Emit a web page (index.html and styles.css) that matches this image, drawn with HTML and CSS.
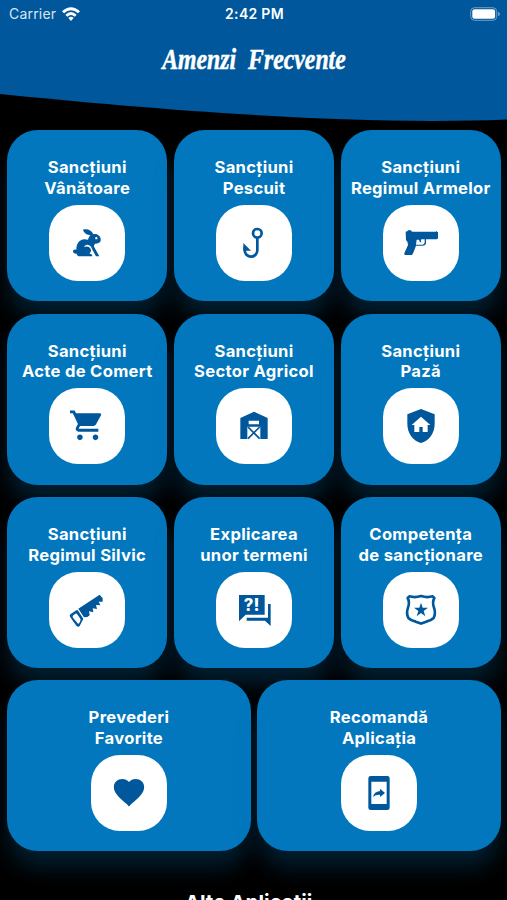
FILE: index.html
```html
<!DOCTYPE html>
<html lang="ro">
<head>
<meta charset="utf-8">
<title>Amenzi Frecvente</title>
<link rel="stylesheet" href="styles.css">
</head>
<body>
<header class="header">
  <div class="status">
    <div class="carrier">Carrier
      <svg class="wifi" viewBox="0 0 54 42"><path d="M0 13Q27-12 54 13L48 19Q27 0 6 19ZM10 23Q27 7 44 23L38 29Q27 19 16 29ZM19 33Q27 26 35 33L27 42Z"/></svg>
    </div>
    <div class="time">2:42 PM</div>
    <svg class="battery" viewBox="0 0 30 14"><rect class="shell" x=".7" y=".7" width="26" height="12.6" rx="3.8"/><rect x="2.3" y="2.3" width="22.8" height="9.4" rx="2.2"/><path class="nub" d="M28 4.7Q30 5.5 30 7T28 9.3Z"/></svg>
  </div>
  <h1 class="title"><span>Amenzi&nbsp; Frecvente</span></h1>
</header>
<main class="cards">
  <a class="card"><span class="label">Sancțiuni<br>Vânătoare</span><span class="tile"><svg viewBox="211 317 102 102"><path fill-rule="evenodd" d="M250 328C262 325 275 328 281 342C287 340 293 342 296 345C301 348 304 354 303 361C302 366 296 369 286 370C283 374 282 377 284 381L299 408H289L277 386C275 378 270 374 263 373C258 373 255 376 253 380C263 375 273 381 274 389C274 394 272 397 269 400C275 400 278 403 278 408H240C235 408 232 405 231 400C225 401 220 398 220 393C220 388 225 386 230 388C230 370 239 358 254 357L265 358C267 352 269 347 273 344C264 344 254 340 250 328ZM290 350A3.5 3.5 0 1 0 290 357A3.5 3.5 0 1 0 290 350Z"/></svg></span></a>
  <a class="card"><span class="label">Sancțiuni<br>Pescuit</span><span class="tile"><svg class="line" viewBox="81 76 102 102"><circle cx="142" cy="98" r="13"/><path d="M142 111V149A19 19 0 0 1 104 149V138"/><path class="solid" d="M100 127L123 150H100Z"/></svg></span></a>
  <a class="card"><span class="label">Sancțiuni<br>Regimul Armelor</span><span class="tile"><svg viewBox="461 317 102 102"><path fill-rule="evenodd" d="M466 334L471 333L473 330H482L485 334H557L560 331V335H563V354L560 357H527V368Q526 376 517 376H497L489 397L485 404H464Q461 403 462 399L473 374Q475 366 467 359ZM499 358L497 373H516Q523 373 523 366V357H513Q510 361 513 367Q507 365 506 358Z"/></svg></span></a>
  <a class="card"><span class="label">Sancțiuni<br>Acte de Comert</span><span class="tile"><svg class="cart" viewBox="0 0 24 24"><path d="M7 18c-1.100 0-1.990.900-1.990 2S5.900 22 7 22s2-.9 2-2-.9-2-2-2zM0 1v2h2l3.600 7.590-1.350 2.450c-.16.280-.25.610-.25.960 0 1.100.9 2 2 2h14v-2H6.420c-.14 0-.25-.11-.25-.25l.03-.12.900-1.630h9.450c.75 0 1.410-.41 1.750-1.030l3.580-6.490c.08-.14.120-.31.120-.48 0-.55-.45-1-1-1H4.210l-.94-2H0zm18 17c-1.100 0-1.990.900-1.990 2s.89 2 1.990 2 2-.9 2-2-.9-2-2-2z"/></svg></span></a>
  <a class="card"><span class="label">Sancțiuni<br>Sector Agricol</span><span class="tile"><svg viewBox="81 72 102 102"><path fill-rule="evenodd" d="M91 99L132 80L173 99V162H91ZM116 107V118H147V107ZM112 125V162H151V125Z"/><path class="brace" d="M114 126L149 161M149 126L114 161"/></svg></span></a>
  <a class="card"><span class="label">Sancțiuni<br>Pază</span><span class="tile"><svg viewBox="461 297 102 102"><path fill-rule="evenodd" d="M512 297L553 313V341C553 370 536 392 512 399C488 392 471 370 471 341V313ZM512 320L484 345H492V366H507V351H517V366H532V345H540Z"/></svg></span></a>
  <a class="card"><span class="label">Sancțiuni<br>Regimul Silvic</span><span class="tile"><svg viewBox="211 306 102 102"><path d="M236 353L300 311L309 322V332L297 332L302 343L289 342L292 354L279 352L281 364L268 361L270 373L263 378L253 379Z"/><path fill-rule="evenodd" d="M212 370L230 358Q233 356 236 360L250 382Q252 386 248 389L240 405Q236 410 230 404L212 379Q208 374 212 370ZM221 373Q217 376 220 380L233 396Q236 400 239 396L242 389Q244 386 241 382L232 369Q230 366 227 368Z"/></svg></span></a>
  <a class="card"><span class="label">Explicarea<br>unor termeni</span><span class="tile"><svg class="chat" viewBox="81 72 102 102"><path d="M87 78H164V137H107L87 157Z"/><path d="M174 105H182V171L165 155H110V146H174Z"/><text x="125" y="127">?!</text></svg></span></a>
  <a class="card"><span class="label">Competența<br>de sancționare</span><span class="tile"><svg viewBox="461 306 102 102"><path class="badge" d="M477 316Q494 321 512 315Q530 321 547 316L552 321Q545 334 551 350Q557 367 550 381Q542 389 528 392Q518 395 512 398Q506 395 496 392Q482 389 474 381Q467 367 473 350Q479 334 472 321Z"/><path d="M512 335L517 350H533L520 360L525 376L512 366L499 376L504 360L491 350H507Z"/></svg></span></a>
  <a class="card wide"><span class="label">Prevederi<br>Favorite</span><span class="tile"><svg viewBox="0 0 24 24"><path d="M12 21.500L10.550 20C5.400 15.500 1.300 12 1.300 7.700C1.300 4.300 4 2.100 7.300 2.100C9.100 2.100 10.900 2.900 12 4.300C13.100 2.900 14.900 2.100 16.700 2.100C20 2.100 22.700 4.300 22.700 7.700C22.700 12 18.600 15.500 13.450 20Z"/></svg></span></a>
  <a class="card wide"><span class="label">Recomandă<br>Aplicația</span><span class="tile"><svg viewBox="1086 287 102 102"><path fill-rule="evenodd" d="M1112 287H1162Q1169 287 1169 294V382Q1169 389 1162 389H1112Q1105 389 1105 382V294Q1105 287 1112 287ZM1114 304V371H1160V304Z"/><path d="M1119 350Q1122 334 1140 332V325L1155 338L1140 350V343Q1127 342 1119 350Z"/></svg></span></a>
</main>
<h2 class="more">Alte Aplicații</h2>
</body>
</html>
```
FILE: styles.css
```css
html, body { height: 900px; overflow: hidden; }
body { margin: 0; background: #000; color: #fff; font-family: Inter, "Noto Sans", sans-serif; }
.header { height: 130.300px; background: #01579b; clip-path: path("M0 0H507V119.500C350 126 150 109 0 94Z"); }
.status { display: grid; grid-template-columns: 1fr auto 1fr; align-items: center; height: 27px; padding: 0 7px 0 9px; font-size: 14px; letter-spacing: .2px; }
.carrier { display: flex; align-items: center; gap: 6px; color: #d8e5f0; }
.wifi { width: 18px; height: 14px; fill: #fff; }
.time { font-weight: 600; letter-spacing: .3px; }
.battery { width: 30px; height: 14px; justify-self: end; fill: #fff; }
.shell { fill: none; stroke: #6f9fc7; stroke-width: 1; }
.nub { fill: #6f9fc7; }
.title { margin: 13px 0 0; height: 38px; font: italic 700 29px/38px "Liberation Serif", serif; text-align: center; white-space: nowrap; }
.title span { display: inline-block; transform: scaleX(.82); -webkit-text-stroke: .5px #fff; }
.cards { display: grid; grid-template-columns: repeat(6, 1fr); grid-auto-rows: 171px; gap: 12.400px 6.300px; padding: 0 6px 0 7px; }
.card { grid-column: span 2; display: flex; flex-direction: column; align-items: center; gap: 6.200px; padding-top: 27px; box-sizing: border-box; border-radius: 31px; background: #0277bd; box-shadow: 0 18px 22px -2px rgba(2, 119, 189, .26); }
.wide { grid-column: span 3; }
.label { font-size: 16.600px; line-height: 20.700px; font-weight: 700; letter-spacing: .3px; text-align: center; white-space: nowrap; }
.tile { display: grid; place-items: center; width: 76px; height: 76px; border-radius: 29px; background: #fff; }
.tile svg { width: 34px; height: 34px; fill: #01579b; overflow: visible; }
.tile .line { fill: none; stroke: #01579b; stroke-width: 8; }
.line .solid { fill: #01579b; stroke: none; }
.brace { fill: none; stroke: #01579b; stroke-width: 5; }
.badge { fill: none; stroke: #01579b; stroke-width: 8; stroke-linejoin: round; }
.chat text { fill: #fff; font: 800 50px Inter, sans-serif; text-anchor: middle; }
.more { margin: 37px 0 0; padding-right: 10px; font-size: 20.500px; line-height: 30px; font-weight: 700; text-align: center; }
```
